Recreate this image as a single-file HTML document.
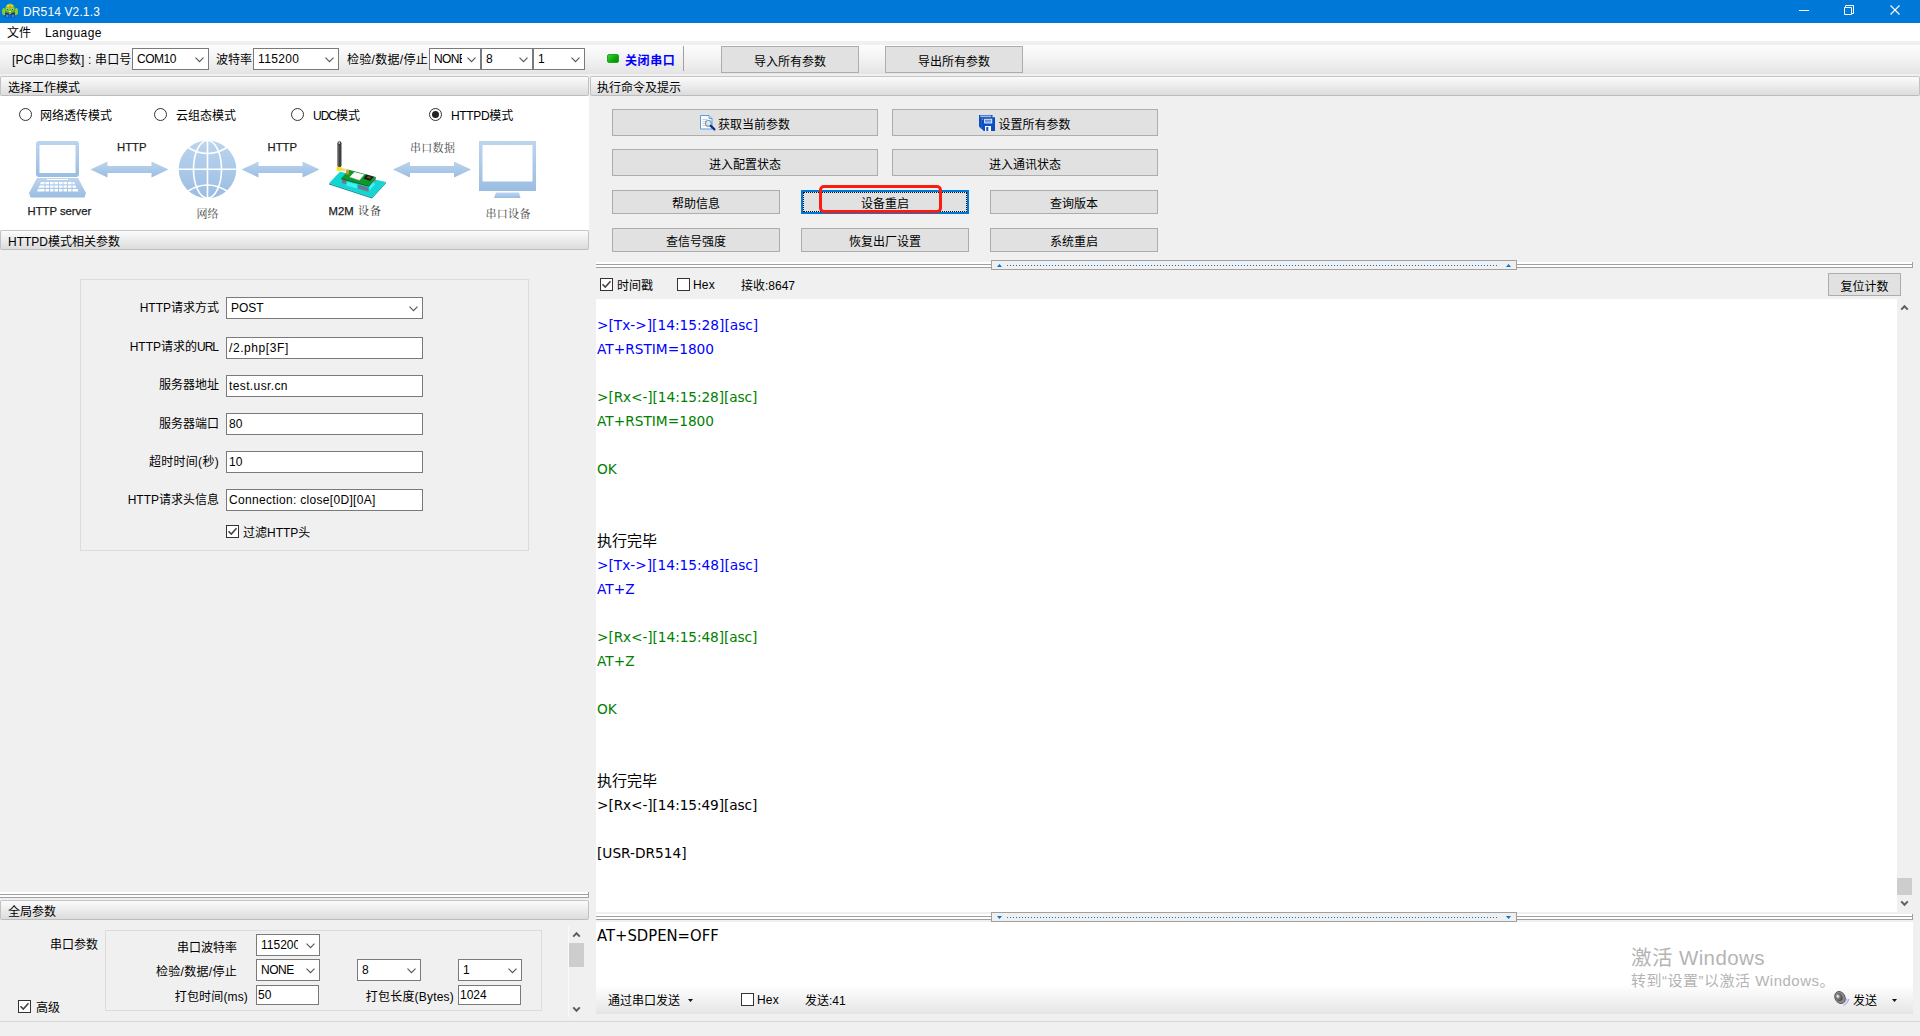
<!DOCTYPE html>
<html lang="zh-CN"><head><meta charset="utf-8"><title>DR514 V2.1.3</title>
<style>
*{box-sizing:border-box;margin:0;padding:0}
html,body{width:1920px;height:1036px;overflow:hidden;background:#f0f0f0}
body{position:relative;font-family:"Liberation Sans","Noto Sans CJK SC",sans-serif;font-size:12px;color:#000;line-height:14px}
.a{position:absolute;white-space:nowrap}
.t{position:absolute;white-space:nowrap;line-height:14px;height:14px}
.r{text-align:right}
#title{left:0;top:0;width:1920px;height:23px;background:#0078d7}
#menu{left:0;top:23px;width:1920px;height:18px;background:#fff}
#tool{left:0;top:45px;width:1920px;height:29px;background:linear-gradient(#fdfdfd,#f2f2f2 50%,#e4e4e4)}
.hdr{height:20px;border:1px solid #c2c2c2;border-top-color:#c6c6c6;border-bottom-color:#bdbdbd;border-radius:2px;background:linear-gradient(#fbfbfb,#ececec 50%,#dcdcdc)}
.hdr span{position:absolute;left:7px;top:4px;line-height:14px}
.cb{height:22px;border:1px solid #7a7a7a;background:#fff}
.cb span{position:absolute;left:4px;top:3px;line-height:14px}
.cb svg{position:absolute;right:4px;top:8px}
.ed{border:1px solid #7a7a7a;background:#fff}
.ed span{position:absolute;left:2px;top:3px;line-height:14px}
.btn{border:1px solid #adadad;background:#e1e1e1;text-align:center}
.w{background:#fff}
.grp{border:1px solid #dcdcdc}
.ck{width:13px;height:13px;border:1px solid #333;background:#fff}
.rd{width:13px;height:13px;border:1px solid #333;border-radius:50%;background:#fff}
.log{left:597px;font-family:"DejaVu Sans","Noto Sans CJK SC",sans-serif;font-size:14.4px;line-height:24px;height:24px;transform:scaleX(.953);transform-origin:0 0}
.cj{font-size:15px;transform:none}.bl{color:#0000ff}.gr{color:#008000}.rx{letter-spacing:-.1px}
.sp{height:6px;background:#fff;border-top:2px solid #fff}
.sp i{position:absolute;left:0;right:0;height:1px;background:#a0a0a0}
.hd{height:10px;border:1px solid #a0a0a0;background:#f0f0f0}
.dots{position:absolute;left:15px;right:17px;top:4px;height:1px;background:repeating-linear-gradient(90deg,#0078d7 0 1px,transparent 1px 3px)}
.sv{font-family:"Liberation Serif","Noto Serif CJK SC",serif}
</style></head><body>

<div class="a" id="title"></div>
<svg class="a" style="left:0;top:0" width="24" height="23" viewBox="0 0 24 23">
<defs><radialGradient id="hg" cx=".45" cy=".3" r=".8"><stop offset="0" stop-color="#a6dd3a"/><stop offset=".6" stop-color="#6fbf0a"/><stop offset="1" stop-color="#4e9a06"/></radialGradient></defs>
<rect x="5.300" y="12.300" width="9.600" height="5.300" rx="1" fill="#0a2f96"/>
<rect x="6" y="14.500" width="2.600" height="2.800" fill="#3f8ad8"/><rect x="11.700" y="14.500" width="2.600" height="2.800" fill="#3f8ad8"/>
<rect x="9" y="14.300" width="2.200" height="3.300" fill="#0a6fd6"/>
<ellipse cx="3.700" cy="11.500" rx="1.600" ry="3.600" fill="#8fcf2a"/><ellipse cx="16.400" cy="11.500" rx="1.600" ry="3.600" fill="#8fcf2a"/>
<circle cx="4.400" cy="14.500" r=".7" fill="#d9b010"/><circle cx="15.600" cy="14.500" r=".7" fill="#d9b010"/>
<path d="M4.900 10.500c0-4 2.300-7 5.200-7s5.200 3 5.200 7c0 1.800-2.300 2.900-5.200 2.900s-5.200-1.100-5.200-2.900z" fill="url(#hg)"/>
<ellipse cx="8" cy="5.600" rx="1.100" ry=".8" fill="#e9f7c8" opacity=".8"/><ellipse cx="12.100" cy="5.600" rx="1" ry=".8" fill="#e9f7c8" opacity=".6"/>
<rect x="9.100" y="4" width="2" height="3.700" rx=".8" fill="#f2a93a"/><rect x="9.200" y="6.700" width="1.800" height="1" fill="#ee7d1a"/>
<circle cx="7.400" cy="9.300" r="1.100" fill="#dcd6f2"/><circle cx="12.600" cy="9.300" r="1.100" fill="#dcd6f2"/>
<circle cx="7.500" cy="9.400" r=".7" fill="#4a2fb0"/><circle cx="12.500" cy="9.400" r=".7" fill="#4a2fb0"/>
<ellipse cx="10" cy="11.500" rx="1.200" ry=".55" fill="#f4ecf6"/>
<rect x="9.100" y="12.800" width="1.900" height="1.200" fill="#e6a81a"/>
</svg>
<div class="t" style="left:23px;top:5px;color:#fff;font-size:12px;letter-spacing:.13px">DR514 V2.1.3</div>
<svg class="a" style="left:1790px;top:0" width="130" height="23" viewBox="0 0 130 23" fill="none" stroke="#fff" stroke-width="1" stroke-linejoin="miter">
<path d="M9 10.5h10"/>
<path d="M55.500 7.500v-2h8v8h-2M55.500 7.500h6v7h-7v-7z" />
<rect x="54.500" y="7.500" width="0" height="0"/>
<path d="M100.500 5.500l9 9M109.500 5.500l-9 9" stroke-width="1.1"/>
</svg>
<div class="a" id="menu"></div>
<div class="t" style="left:7px;top:26px">文件</div>
<div class="t" style="left:45px;top:26px;letter-spacing:.45px">Language</div>
<div class="a" id="tool"></div>
<div class="t" style="left:12px;top:53px;letter-spacing:.15px">[PC串口参数]&nbsp;:&nbsp;串口号</div>
<div class="a cb" style="left:132px;top:48px;width:77px;height:22px"><span style="letter-spacing:-0.5px">COM10</span><svg width="9" height="6" viewBox="0 0 9 6"><path d="M.5 .6l4 4L8.500 .6" fill="none" stroke="#555" stroke-width="1.1"/></svg></div>
<div class="t" style="left:216px;top:53px;">波特率</div>
<div class="a cb" style="left:253px;top:48px;width:86px;height:22px"><span style="letter-spacing:0.35px">115200</span><svg width="9" height="6" viewBox="0 0 9 6"><path d="M.5 .6l4 4L8.500 .6" fill="none" stroke="#555" stroke-width="1.1"/></svg></div>
<div class="t" style="left:347px;top:53px;letter-spacing:.3px">检验/数据/停止</div>
<div class="a cb" style="left:429px;top:48px;width:52px;height:22px"><span style="letter-spacing:-0.6px"><b style="font-weight:normal;display:inline-block;width:27.500px;overflow:hidden;vertical-align:top">NONE</b></span><svg width="9" height="6" viewBox="0 0 9 6"><path d="M.5 .6l4 4L8.500 .6" fill="none" stroke="#555" stroke-width="1.1"/></svg></div>
<div class="a cb" style="left:481px;top:48px;width:52px;height:22px"><span style="">8</span><svg width="9" height="6" viewBox="0 0 9 6"><path d="M.5 .6l4 4L8.500 .6" fill="none" stroke="#555" stroke-width="1.1"/></svg></div>
<div class="a cb" style="left:533px;top:48px;width:52px;height:22px"><span style="">1</span><svg width="9" height="6" viewBox="0 0 9 6"><path d="M.5 .6l4 4L8.500 .6" fill="none" stroke="#555" stroke-width="1.1"/></svg></div>
<div class="a" style="left:607px;top:54px;width:12px;height:9px;border-radius:2px;background:linear-gradient(135deg,#3fd13f,#0da50d 60%,#0a8a0a);border:1px solid #18a818"></div>
<div class="t" style="left:625px;top:53.5px;color:#0000ff;font-weight:bold;letter-spacing:.6px">关闭串口</div>
<div class="a" style="left:683px;top:46px;width:1px;height:25px;background:#a0a0a0"></div>
<div class="a btn" style="left:721px;top:46px;width:138px;height:27px;line-height:30px;overflow:hidden;">导入所有参数</div>
<div class="a btn" style="left:885px;top:46px;width:138px;height:27px;line-height:30px;overflow:hidden;">导出所有参数</div>
<div class="a hdr" style="left:0px;top:76px;width:589px"><span>选择工作模式</span></div>
<div class="a w" style="left:0;top:96px;width:589px;height:134px"></div>
<div class="a rd" style="left:19px;top:108px"></div>
<div class="t" style="left:40px;top:109px;">网络透传模式</div>
<div class="a rd" style="left:154px;top:108px"></div>
<div class="t" style="left:176px;top:109px;">云组态模式</div>
<div class="a rd" style="left:291px;top:108px"></div>
<div class="t" style="left:313px;top:109px;"><span style="letter-spacing:-1px">UDC</span>模式</div>
<div class="a rd" style="left:429px;top:108px"><i style="position:absolute;left:2px;top:2px;width:7px;height:7px;border-radius:50%;background:#222"></i></div>
<div class="t" style="left:451px;top:109px;"><span style="letter-spacing:-.35px">HTTPD</span>模式</div>
<svg class="a" style="left:0;top:136px" width="589" height="90" viewBox="0 136 589 90">
<defs><linearGradient id="g" x1="0" y1="0" x2="0" y2="1"><stop offset="0" stop-color="#bcd5ef"/><stop offset="1" stop-color="#9bbde2"/></linearGradient></defs>
<g fill="url(#g)">
<path d="M39 141h37q3 0 3 3v30q0 3-3 3h-37q-3 0-3-3v-30q0-3 3-3zM39.500 145v28h36v-28z" fill-rule="evenodd"/>
<path d="M37 178h41l8 15-1.500 4.500h-54l-1.500-4.500z"/>
<path id="ar" d="M90.500 169.500l17-8v4.500h44v-4.500l17 8-17 8v-4.500h-44v4.500z"/>
<use href="#ar" x="151"/><use href="#ar" x="302.500"/>
<circle cx="207.500" cy="169.300" r="28.800"/>
<path d="M479 141h57v50h-57zM482.500 145v36.500h50v-36.500z" fill-rule="evenodd"/>
<path d="M496 192.500h23l1.500 5.500h-26.500z"/>
</g>
<g fill="#fff"><rect x="47" y="179" width="21" height="1"/>
<path d="M41 182h33l1 2.200h-35zM39.500 185.500h36l1 2.200h-38zM38 189h39.500l1 2.500h-41.500z"/></g>
<g stroke="url(#g)" stroke-width="1"><path d="M45 181v12M49.500 181v12M54 181v12M58.500 181v12M63 181v12M67.500 181v12M72 181v12" /></g>
<g fill="none" stroke="#fff" stroke-width="1.600">
<path d="M207.500 140v59M178 169.300h59"/>
<ellipse cx="207.500" cy="169.300" rx="14" ry="28.800"/>
<path d="M188 147.500q19.500 12 39 0M188 191q19.500-12 39 0"/>
</g>
<!-- m2m device -->
<g>
<path d="M329 183.300l11-11.500 46 10.200-14 15.200z" fill="#12d6d4"/>
<path d="M329 183.300l43 13.900 14-15.200v1.200l-14 15.200-43-13.900z" fill="#0a9c9c"/>
<path d="M346 181.500l11 3v4l-11-3zM369 186.500l5-6 1 .5v3.500l-5.500 6z" fill="#3cf2f2"/>
<path d="M342 179l4.500 1.300v4l-4.500-1.400zM358 184.500l10.500 3v4.200l-10.500-3.200z" fill="#70788c"/>
<path d="M373.500 180.500l2.200-2v3l-2.200 2.400z" fill="#8a90a0"/>
<path d="M341.300 178l7.700-8.300 26.900 7.300-7.100 8.400z" fill="#0c9a2c"/>
<path d="M341.300 178l27.500 7.400 7.100-8.400v1.300l-7.100 8.500-27.500-7.500z" fill="#066a1c"/>
<path d="M349.600 177l4.700-4.900 9.900 2.500-4.700 5.600z" fill="#fafafa"/>
<path d="M349.600 177l9.900 3.200 4.700-5.600" fill="none" stroke="#c8b8c8" stroke-width=".5"/>
<path d="M363.500 178.600l2.800-4 7.400 2.200-3.700 4.200z" fill="#1c1c18"/>
<path d="M366.500 177.800l3.500 1 1.500-1.800-3.500-1z" fill="#5a5030"/>
<rect x="337.400" y="141.300" width="4.100" height="26" rx="2" fill="#3e3e3e"/>
<rect x="338.600" y="142" width="1.400" height="2" rx=".7" fill="#ddd"/>
<rect x="338.200" y="145" width=".9" height="21" fill="#666"/>
<rect x="336.700" y="166.900" width="5" height="3.800" fill="#f2e60a"/>
<path d="M341 168l4.500 .8v2.800l-4.500-.9z" fill="#e8e070"/>
<rect x="346" y="169.400" width="3" height="5.200" rx=".6" fill="#d08a1e"/>
<rect x="346" y="170.500" width="3" height=".8" fill="#f0c060"/>
</g>
<g font-family="Liberation Sans, sans-serif" font-size="11.300" fill="#1c1c1c" stroke="#1c1c1c" stroke-width=".25">
<text x="117" y="151">HTTP</text><text x="267.500" y="151">HTTP</text>
<text x="27.500" y="215">HTTP server</text>
<text x="328.500" y="215">M2M</text>
</g>
<g font-family="Liberation Serif, Noto Serif CJK SC, serif" font-size="11" fill="#444">
<text x="196.500" y="218">网络</text>
<text x="410" y="151.500" letter-spacing=".3">串口数据</text>
<text x="358" y="215" fill="#333" letter-spacing="1">设备</text>
<text x="485.500" y="218" letter-spacing=".3">串口设备</text>
</g>
</svg>
<div class="a hdr" style="left:0px;top:230px;width:589px"><span>HTTPD模式相关参数</span></div>
<div class="a grp" style="left:80px;top:279px;width:449px;height:272px"></div>
<div class="t r" style="right:1701px;top:301px;">HTTP请求方式</div>
<div class="a cb" style="left:226px;top:297px;width:197px;height:22px"><span style="">POST</span><svg width="9" height="6" viewBox="0 0 9 6"><path d="M.5 .6l4 4L8.500 .6" fill="none" stroke="#555" stroke-width="1.1"/></svg></div>
<div class="t r" style="right:1701px;top:340px;">HTTP请求的<span style="letter-spacing:-1px;margin-right:1px">URL</span></div>
<div class="a ed" style="left:226px;top:337px;width:197px;height:22px"><span style="letter-spacing:0.58px;left:2px;top:3px">/2.php[3F]</span></div>
<div class="t r" style="right:1701px;top:378px;">服务器地址</div>
<div class="a ed" style="left:226px;top:375px;width:197px;height:22px"><span style="letter-spacing:0.38px;left:2px;top:3px">test.usr.cn</span></div>
<div class="t r" style="right:1701px;top:417px;">服务器端口</div>
<div class="a ed" style="left:226px;top:413px;width:197px;height:22px"><span style="left:2px;top:3px">80</span></div>
<div class="t r" style="right:1701px;top:455px;letter-spacing:.3px">超时时间(秒)</div>
<div class="a ed" style="left:226px;top:451px;width:197px;height:22px"><span style="left:2px;top:3px">10</span></div>
<div class="t r" style="right:1701px;top:493px;">HTTP请求头信息</div>
<div class="a ed" style="left:226px;top:489px;width:197px;height:22px"><span style="letter-spacing:0.32px;left:2px;top:3px">Connection: close[0D][0A]</span></div>
<div class="a ck" style="left:226px;top:525px"><svg width="11" height="11" viewBox="0 0 11 11" style="position:absolute;left:0;top:0"><path d="M1.500 5.300l2.800 2.800 5.200-5.800" fill="none" stroke="#444" stroke-width="1.600"/></svg></div>
<div class="t" style="left:243px;top:526px;">过滤HTTP头</div>
<div class="a" style="left:0px;top:892px;width:589px;height:6px;background:#fff"><i style="position:absolute;left:0;right:0;top:2px;height:1px;background:#a0a0a0"></i><i style="position:absolute;left:0;right:0;top:5px;height:1px;background:#a0a0a0"></i><i style="position:absolute;right:0;top:0;width:1px;height:6px;background:#a0a0a0"></i></div>
<div class="a hdr" style="left:0px;top:900px;width:589px"><span>全局参数</span></div>
<div class="t" style="left:50px;top:938px;">串口参数</div>
<div class="a grp" style="left:105px;top:930px;width:437px;height:81px"></div>
<div class="t r" style="right:1683px;top:940.5px;">串口波特率</div>
<div class="a cb" style="left:256px;top:934px;width:64px;height:22px"><span style=""><b style="font-weight:normal;display:inline-block;width:37px;overflow:hidden;vertical-align:top">115200</b></span><svg width="9" height="6" viewBox="0 0 9 6"><path d="M.5 .6l4 4L8.500 .6" fill="none" stroke="#555" stroke-width="1.1"/></svg></div>
<div class="t r" style="right:1683px;top:965px;letter-spacing:.3px">检验/数据/停止</div>
<div class="a cb" style="left:256px;top:959px;width:64px;height:22px"><span style="letter-spacing:-0.5px">NONE</span><svg width="9" height="6" viewBox="0 0 9 6"><path d="M.5 .6l4 4L8.500 .6" fill="none" stroke="#555" stroke-width="1.1"/></svg></div>
<div class="a cb" style="left:357px;top:959px;width:64px;height:22px"><span style="">8</span><svg width="9" height="6" viewBox="0 0 9 6"><path d="M.5 .6l4 4L8.500 .6" fill="none" stroke="#555" stroke-width="1.1"/></svg></div>
<div class="a cb" style="left:458px;top:959px;width:64px;height:22px"><span style="">1</span><svg width="9" height="6" viewBox="0 0 9 6"><path d="M.5 .6l4 4L8.500 .6" fill="none" stroke="#555" stroke-width="1.1"/></svg></div>
<div class="t r" style="right:1672px;top:989.5px;letter-spacing:.15px">打包时间(ms)</div>
<div class="a ed" style="left:256px;top:985px;width:63px;height:20px"><span style="left:1px;top:2px">50</span></div>
<div class="t r" style="right:1466px;top:989.5px;letter-spacing:.2px">打包长度(Bytes)</div>
<div class="a ed" style="left:458px;top:985px;width:63px;height:20px"><span style="left:1px;top:2px">1024</span></div>
<div class="a ck" style="left:18px;top:1000px"><svg width="11" height="11" viewBox="0 0 11 11" style="position:absolute;left:0;top:0"><path d="M1.500 5.300l2.800 2.800 5.200-5.800" fill="none" stroke="#444" stroke-width="1.600"/></svg></div>
<div class="t" style="left:36px;top:1001px;">高级</div>
<div class="a" style="left:568px;top:926px;width:1px;height:91px;background:#fafafa"></div>
<svg class="a" style="left:572px;top:931px" width="9" height="7" viewBox="0 0 9 7"><path d="M1.200 5.600l3.300-3.400 3.300 3.400" fill="none" stroke="#606060" stroke-width="2"/></svg>
<div class="a" style="left:569px;top:943px;width:15px;height:24px;background:#cdcdcd"></div>
<svg class="a" style="left:572px;top:1006px" width="9" height="7" viewBox="0 0 9 7"><path d="M1.200 1.400l3.300 3.400 3.300-3.400" fill="none" stroke="#606060" stroke-width="2"/></svg>
<div class="a hdr" style="left:590px;top:76px;width:1330px"><span style="left:6px">执行命令及提示</span></div>
<div class="a btn" style="left:612px;top:109px;width:266px;height:27px;line-height:30px;overflow:hidden;"><svg width="16" height="16" viewBox="0 0 16 16" style="vertical-align:-2px;margin-right:2px"><path d="M.5 .5h8.500l3 3v10.500h-11.500z" fill="#fbfcff" stroke="#5b9be0"/><path d="M9 .5v3h3" fill="#d4e4f8" stroke="#5b9be0"/><path d="M2.500 4.500h5M2.500 6.500h4M2.500 8.500h3M2.500 10.500h3" stroke="#c4d0e6"/><circle cx="8.400" cy="8.400" r="2.900" fill="#c4f0fa" stroke="#8a8f98" stroke-width="1.100"/><path d="M7 7.400l1.600-1" stroke="#fff" stroke-width=".8"/><path d="M10.800 10.900l3.600 3.500" stroke="#0a2a9c" stroke-width="2.200" stroke-linecap="round"/></svg>获取当前参数</div>
<div class="a btn" style="left:892px;top:109px;width:266px;height:27px;line-height:30px;overflow:hidden;"><svg width="16" height="16" viewBox="0 0 16 16" style="vertical-align:-1.500px;margin-right:3px"><path d="M0 0h13.500v2.500h-11v11.500l-2.500-2.500z" fill="#0a4fc4"/><path d="M1.200 1.200h11" stroke="#fff" stroke-width=".9"/><path d="M2.500 2.500h13.500v13.500h-11l-2.500-2.500z" fill="#0a4fc4" stroke="#1a3f9c" stroke-width=".4"/><rect x="5.200" y="3.800" width="8" height="4.600" fill="#fff"/><path d="M6 5.200h6.400M6 6.900h6.400" stroke="#0a4fc4" stroke-width=".9"/><rect x="6" y="11" width="6" height="5" fill="#fff"/><rect x="7.300" y="12" width="2" height="4" fill="#0a4fc4"/><circle cx="3.700" cy="3.900" r=".5" fill="#fff"/></svg>设置所有参数</div>
<div class="a btn" style="left:612px;top:149px;width:266px;height:27px;line-height:30px;overflow:hidden;">进入配置状态</div>
<div class="a btn" style="left:892px;top:149px;width:266px;height:27px;line-height:30px;overflow:hidden;">进入通讯状态</div>
<div class="a btn" style="left:612px;top:190px;width:168px;height:24px;line-height:27px;overflow:hidden;">帮助信息</div>
<div class="a btn" style="left:801px;top:190px;width:168px;height:24px;line-height:27px;overflow:hidden;border:2px solid #0078d7;line-height:25px">设备重启</div>
<div class="a" style="left:803px;top:192px;width:164px;height:20px;border:1px dotted #111"></div>
<div class="a btn" style="left:990px;top:190px;width:168px;height:24px;line-height:27px;overflow:hidden;">查询版本</div>
<div class="a btn" style="left:612px;top:228px;width:168px;height:24px;line-height:27px;overflow:hidden;">查信号强度</div>
<div class="a btn" style="left:801px;top:228px;width:168px;height:24px;line-height:27px;overflow:hidden;">恢复出厂设置</div>
<div class="a btn" style="left:990px;top:228px;width:168px;height:24px;line-height:27px;overflow:hidden;">系统重启</div>
<div class="a" style="left:819px;top:185px;width:123px;height:28px;border:3px solid #fb1c10;border-radius:5px"></div>
<div class="a" style="left:596px;top:262px;width:1317px;height:6px;background:#fff"><i style="position:absolute;left:0;right:0;top:2px;height:1px;background:#a0a0a0"></i><i style="position:absolute;left:0;right:0;top:5px;height:1px;background:#a0a0a0"></i><i style="position:absolute;right:0;top:0;width:1px;height:6px;background:#a0a0a0"></i></div>
<div class="a hd" style="left:991px;top:260px;width:526px"><div class="dots"></div><svg width="5" height="3" viewBox="0 0 5 3" style="position:absolute;top:3px;left:5px"><path d="M0 3l2.500-3 2.500 3z" fill="#0078d7"/></svg><svg width="5" height="3" viewBox="0 0 5 3" style="position:absolute;top:3px;right:5px"><path d="M0 3l2.500-3 2.500 3z" fill="#0078d7"/></svg></div>
<div class="a ck" style="left:600px;top:278px"><svg width="11" height="11" viewBox="0 0 11 11" style="position:absolute;left:0;top:0"><path d="M1.500 5.300l2.800 2.800 5.200-5.800" fill="none" stroke="#444" stroke-width="1.600"/></svg></div>
<div class="t" style="left:617px;top:279px;">时间戳</div>
<div class="a ck" style="left:677px;top:278px"></div>
<div class="t" style="left:693px;top:278px;letter-spacing:.15px">Hex</div>
<div class="t" style="left:741px;top:279px;">接收:8647</div>
<div class="a btn" style="left:1828px;top:273px;width:73px;height:23px;line-height:26px;overflow:hidden;">复位计数</div>
<div class="a w" style="left:596px;top:299px;width:1301px;height:613px"></div>
<div class="a log bl" style="top:312.5px">&gt;[Tx-&gt;][14:15:28][asc]</div>
<div class="a log bl" style="top:336.5px">AT+RSTIM=1800</div>
<div class="a log gr rx" style="top:384.5px">&gt;[Rx&lt;-][14:15:28][asc]</div>
<div class="a log gr" style="top:408.5px">AT+RSTIM=1800</div>
<div class="a log gr" style="top:456.5px">OK</div>
<div class="a log cj" style="top:528.5px">执行完毕</div>
<div class="a log bl" style="top:552.5px">&gt;[Tx-&gt;][14:15:48][asc]</div>
<div class="a log bl" style="top:576.5px">AT+Z</div>
<div class="a log gr rx" style="top:624.5px">&gt;[Rx&lt;-][14:15:48][asc]</div>
<div class="a log gr" style="top:648.5px">AT+Z</div>
<div class="a log gr" style="top:696.5px">OK</div>
<div class="a log cj" style="top:768.5px">执行完毕</div>
<div class="a log rx" style="top:792.5px">&gt;[Rx&lt;-][14:15:49][asc]</div>
<div class="a log " style="top:840.5px">[USR-DR514]</div>
<svg class="a" style="left:1900px;top:304px" width="9" height="7" viewBox="0 0 9 7"><path d="M1.200 5.600l3.300-3.400 3.300 3.400" fill="none" stroke="#606060" stroke-width="2"/></svg>
<div class="a" style="left:1897px;top:878px;width:15px;height:17px;background:#cdcdcd"></div>
<svg class="a" style="left:1900px;top:900px" width="9" height="7" viewBox="0 0 9 7"><path d="M1.200 1.400l3.300 3.400 3.300-3.400" fill="none" stroke="#606060" stroke-width="2"/></svg>
<div class="a" style="left:596px;top:922px;width:1317px;height:92px;background:linear-gradient(#fff 0,#fff 68%,#e5e5e5 100%)"></div>
<div class="a" style="left:596px;top:914px;width:1317px;height:6px;background:#fff"><i style="position:absolute;left:0;right:0;top:2px;height:1px;background:#a0a0a0"></i><i style="position:absolute;left:0;right:0;top:5px;height:1px;background:#a0a0a0"></i><i style="position:absolute;right:0;top:0;width:1px;height:6px;background:#a0a0a0"></i></div>
<div class="a hd" style="left:991px;top:912px;width:526px"><div class="dots"></div><svg width="5" height="3" viewBox="0 0 5 3" style="position:absolute;top:3px;left:5px"><path d="M0 0h5l-2.500 3z" fill="#0078d7"/></svg><svg width="5" height="3" viewBox="0 0 5 3" style="position:absolute;top:3px;right:5px"><path d="M0 0h5l-2.500 3z" fill="#0078d7"/></svg></div>
<div class="a log" style="top:924px;font-size:16.100px;transform:scaleX(.92)">AT+SDPEN=OFF</div>
<div class="t" style="left:608px;top:994px;">通过串口发送</div>
<svg class="a" style="left:688px;top:999px" width="5" height="3" viewBox="0 0 5 3"><path d="M0 0h5l-2.500 3z" fill="#111"/></svg>
<div class="a ck" style="left:741px;top:993px"></div>
<div class="t" style="left:757px;top:993px;letter-spacing:.15px">Hex</div>
<div class="t" style="left:805px;top:994px;">发送:41</div>
<div class="t" style="left:1631px;top:946px;font-size:20.500px;line-height:24px;height:24px;color:#b4b4b4;letter-spacing:.4px">激活 Windows</div>
<div class="t" style="left:1631px;top:972px;font-size:15px;line-height:18px;height:18px;color:#b4b4b4;letter-spacing:.5px">转到“设置”以激活 Windows。</div>
<svg class="a" style="left:1833px;top:990px" width="18" height="17" viewBox="0 0 18 17"><defs><radialGradient id="sp" cx=".4" cy=".35" r=".7"><stop offset="0" stop-color="#e8e8e8"/><stop offset=".45" stop-color="#777"/><stop offset="1" stop-color="#3c3c3c"/></radialGradient></defs><g transform="rotate(-28 7 7.500)"><ellipse cx="7" cy="7.500" rx="5" ry="6.300" fill="#8c8c86" stroke="#4a4a46" stroke-width=".8"/><ellipse cx="6.300" cy="6.800" rx="3.200" ry="4" fill="url(#sp)"/><circle cx="5.600" cy="5.200" r="1" fill="#f4f4f4"/></g><path d="M10 13.500q3.200-1.400 4-4.800M10.500 15.500q4.300-1.800 5.500-6.500" fill="none" stroke="#9a9af0" stroke-width="1"/></svg>
<div class="t" style="left:1853px;top:994px;">发送</div>
<svg class="a" style="left:1892px;top:999px" width="5" height="3" viewBox="0 0 5 3"><path d="M0 0h5l-2.500 3z" fill="#111"/></svg>
<div class="a" style="left:0;top:1021px;width:1920px;height:1px;background:#d7d7d7"></div>
</body></html>
